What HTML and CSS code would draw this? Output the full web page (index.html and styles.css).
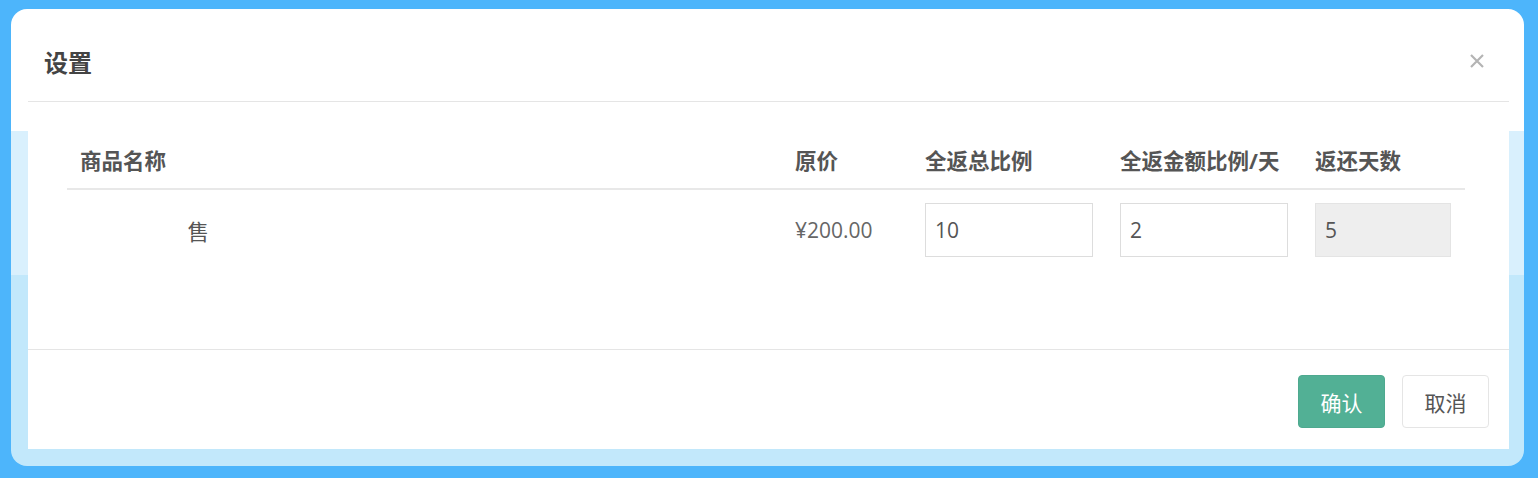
FILE: index.html
```html
<!DOCTYPE html>
<html lang="zh-CN">
<head>
    <meta charset="UTF-8">
    <meta name="viewport" content="width=device-width, initial-scale=1.0">
    <title>设置</title>
    <link rel="stylesheet" href="styles.css">
</head>
<body>
    <div class="frame">
        <div class="panel">
            <div class="modal-header">
                <h4 class="modal-title">设置</h4>
                <button class="close" type="button" aria-label="关闭">
                    <svg width="16" height="16" viewBox="0 0 16 16">
                        <path d="M2 2 L14 14 M14 2 L2 14" stroke="#b4b4b4" stroke-width="2.2" fill="none"/>
                    </svg>
                </button>
            </div>

            <div class="modal-body">
                <div class="table">
                    <div class="th">商品名称</div>
                    <div class="th">原价</div>
                    <div class="th">全返总比例</div>
                    <div class="th">全返金额比例/天</div>
                    <div class="th">返还天数</div>

                    <div class="td"><span class="masked">新款全返预</span>售</div>
                    <div class="td price">¥200.00</div>
                    <div class="td"><input type="text" value="10"></div>
                    <div class="td"><input type="text" value="2"></div>
                    <div class="td"><input type="text" value="5" readonly class="readonly"></div>
                </div>
            </div>

            <!-- 底部按钮 -->
            <div class="modal-footer">
                <button class="btn btn-primary">确认</button>
                <button class="btn btn-default">取消</button>
            </div>
        </div>
    </div>
</body>
</html>
```

FILE: styles.css
```css
body {
    margin: 0;
    padding: 9px 14px 12px 11px;
    background-color: #4db5fb;
    font-family: "Open Sans", "Noto Sans CJK SC", sans-serif;
    color: #555;
}
.frame {
    border-radius: 16px;
    padding: 0 15px 17px 17px;
    background: linear-gradient(to bottom, #fff 0 122px, #d9f0fd 122px 266px, #c2e8fb 266px);
}
.panel {
    background-color: #fff;
}
.modal-header {
    display: flex;
    align-items: center;
    justify-content: space-between;
    height: 93px;
    box-sizing: border-box;
    padding: 16px 24px 0 16px;
    border-bottom: 1px solid #e5e5e5;
}
.modal-title {
    margin: 0;
    font-size: 24px;
    font-weight: bold;
    line-height: 1.2;
    color: #444;
}
.close {
    border: none;
    background: none;
    padding: 0;
    margin-top: -4px;
    cursor: pointer;
    display: flex;
}
.modal-body {
    height: 247px;
    box-sizing: border-box;
    padding: 30px 44px 0 39px;
}
.table {
    display: grid;
    grid-template-columns: 715px 130px 195px 195px 163px;
}
.th {
    height: 58px;
    box-sizing: border-box;
    padding: 0 13px 2px;
    display: flex;
    align-items: center;
    border-bottom: 2px solid #e8e8e8;
    font-size: 21.5px;
    font-weight: bold;
    color: #555;
    white-space: nowrap;
}
.td {
    padding: 13px 14px 0 13px;
    height: 67px;
    box-sizing: border-box;
    display: flex;
    align-items: center;
    font-size: 21.5px;
    color: #555;
    white-space: nowrap;
}
.td .masked {
    color: #fff;
}
.price {
    color: #666;
    font-size: 21px;
}
input[type="text"] {
    width: 100%;
    height: 54px;
    box-sizing: border-box;
    padding: 0 9px;
    border: 1px solid #ddd;
    font-family: "Open Sans", sans-serif;
    font-size: 21px;
    color: #555;
    background-color: #fff;
    outline: none;
}
input.readonly {
    background-color: #eee;
    border-color: #e4e4e4;
}
.modal-footer {
    display: flex;
    justify-content: flex-end;
    gap: 17px;
    padding: 25px 20px 21px;
    border-top: 1px solid #e5e5e5;
}
.btn {
    width: 87px;
    height: 53px;
    border-radius: 4px;
    font-family: "Open Sans", "Noto Sans CJK SC", sans-serif;
    font-size: 21px;
    cursor: pointer;
}
.btn-primary {
    background-color: #52b095;
    border: 1px solid #4ea98f;
    color: #fff;
}
.btn-default {
    background-color: #fff;
    border: 1px solid #e5e5e5;
    color: #555;
}
```
